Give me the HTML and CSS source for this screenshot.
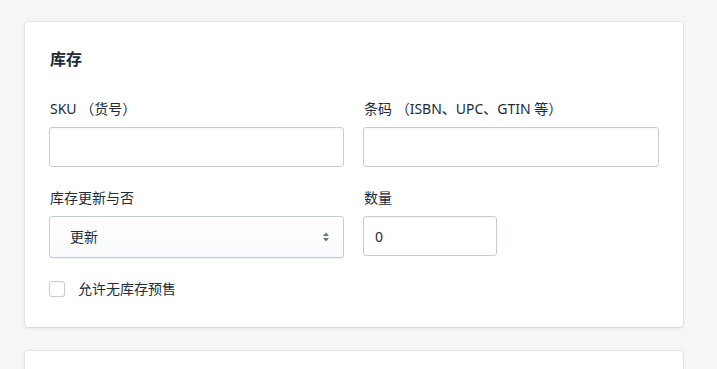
FILE: index.html
```html
<!DOCTYPE html>
<html lang="zh-CN">
<head>
<meta charset="utf-8">
<link rel="stylesheet" href="styles.css">
</head>
<body>
<div class="page">
  <section class="card">
    <h2 class="card-title">库存</h2>
    <div class="grid">
      <div class="field">
        <label class="label">SKU （货号）</label>
        <input class="input" type="text">
      </div>
      <div class="field">
        <label class="label">条码 （ISBN、UPC、GTIN 等）</label>
        <input class="input" type="text">
      </div>
      <div class="field">
        <label class="label">库存更新与否</label>
        <div class="select">
          <span class="select-value">更新</span>
          <svg class="select-arrows" width="8" height="12" viewBox="0 0 8 12"><path d="M4 1.5 L7 5 H1 Z" fill="#637381"/><path d="M4 10.5 L7 7 H1 Z" fill="#637381"/></svg>
        </div>
      </div>
      <div class="field">
        <label class="label">数量</label>
        <input class="input input-qty" type="text" value="0">
      </div>
    </div>
    <label class="check-row">
      <span class="checkbox"></span>
      <span class="check-label">允许无库存预售</span>
    </label>
  </section>
  <section class="card card-next"></section>
</div>
</body>
</html>
```
FILE: styles.css
```css
* { box-sizing: border-box; }
html, body { margin: 0; padding: 0; }
body {
  background: #f4f6f8;
  font-family: "Noto Sans", "Noto Sans CJK SC", sans-serif;
  color: #212b36;
  font-size: 14px;
  overflow: hidden;
}
.page {
  padding: 22px 0 0 25px;
  display: flex;
  flex-direction: column;
  gap: 24px;
}
.card {
  width: 658px;
  background: #fff;
  border-radius: 3px;
  box-shadow: 0 0 0 1px rgba(63,63,68,0.06), 0 1px 3px 0 rgba(63,63,68,0.15);
  padding: 25px 24px 28px 24px;
}
.card-next { height: 40px; }
.card-title {
  margin: 0 0 28px 1px;
  font-size: 16px;
  font-weight: 700;
  line-height: 24px;
}
.grid {
  display: grid;
  grid-template-columns: 295px 296px;
  column-gap: 19px;
  row-gap: 21px;
  align-items: start;
}
.field { display: flex; flex-direction: column; gap: 8px; }
.label {
  line-height: 20px;
  font-size: 14px;
  color: #212b36;
  padding-left: 1px;
}
.input {
  height: 40px;
  width: 100%;
  border: 1px solid #c4cdd5;
  border-radius: 3px;
  padding: 0 11px;
  font: inherit;
  color: #212b36;
  background: #fff;
  box-shadow: inset 0 1px 0 0 rgba(99,115,129,0.05);
}
.input-qty { width: 134px; }
.select {
  height: 42px;
  border: 1px solid #c4cdd5;
  border-radius: 3px;
  background: linear-gradient(180deg, #fff, #f9fafb);
  box-shadow: 0 1px 0 0 rgba(22,29,37,0.05);
  display: flex;
  align-items: center;
  justify-content: space-between;
  padding: 0 13px 0 20px;
}
.select-value { line-height: 20px; }
.check-row {
  margin-top: 21px;
  display: flex;
  align-items: center;
  gap: 13px;
}
.checkbox {
  width: 16px;
  height: 16px;
  border: 1px solid #c4cdd5;
  border-radius: 3px;
  background: #fff;
  box-shadow: inset 0 1px 0 0 rgba(99,115,129,0.05);
}
.check-label { line-height: 20px; }
```
